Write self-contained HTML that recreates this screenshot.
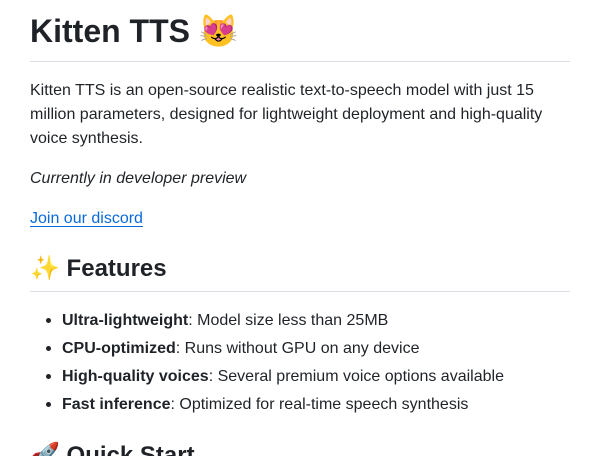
<!DOCTYPE html>
<html><head><meta charset="utf-8"><style>
html,body{margin:0;padding:0;background:#fff;width:599px;height:456px;overflow:hidden;}
body{font-family:"Liberation Sans",Arial,sans-serif;color:#1f2328;font-size:16px;position:relative;}
.a{position:absolute;left:30px;white-space:nowrap;}
.hr{position:absolute;left:30px;width:540px;height:1px;background:#d8dee4;}
.li{position:absolute;left:62px;line-height:24px;white-space:nowrap;}
.li:before{content:"";position:absolute;left:-16px;top:9px;width:5px;height:5px;border-radius:50%;background:#1f2328;}
.emo{font-family:"Noto Color Emoji","Apple Color Emoji","Segoe UI Emoji",sans-serif;font-weight:normal;}
</style></head><body>
<div class="a" style="top:10px;font-size:32px;font-weight:bold;line-height:42px;">Kitten TTS <span class="emo">😻</span></div>
<div class="hr" style="top:61px"></div>
<div class="a" style="top:79px;line-height:24px;white-space:normal;width:540px;">Kitten TTS is an open-source realistic text-to-speech model with just 15 million parameters, designed for lightweight deployment and high-quality voice synthesis.</div>
<div class="a" style="top:167px;line-height:24px;font-style:italic;">Currently in developer preview</div>
<div class="a" style="top:207px;line-height:24px;color:#0969da;text-decoration:underline;text-underline-offset:3px;">Join our discord</div>
<div class="a" style="top:253px;font-size:24px;font-weight:bold;line-height:30px;"><span class="emo">✨</span> Features</div>
<div class="hr" style="top:291px"></div>
<div class="li" style="top:309px"><b>Ultra-lightweight</b>: Model size less than 25MB</div>
<div class="li" style="top:337px"><b>CPU-optimized</b>: Runs without GPU on any device</div>
<div class="li" style="top:365px"><b>High-quality voices</b>: Several premium voice options available</div>
<div class="li" style="top:393px"><b>Fast inference</b>: Optimized for real-time speech synthesis</div>
<div class="a" style="top:440px;font-size:24px;font-weight:bold;line-height:30px;"><span class="emo">🚀</span> Quick Start</div>
</body></html>
